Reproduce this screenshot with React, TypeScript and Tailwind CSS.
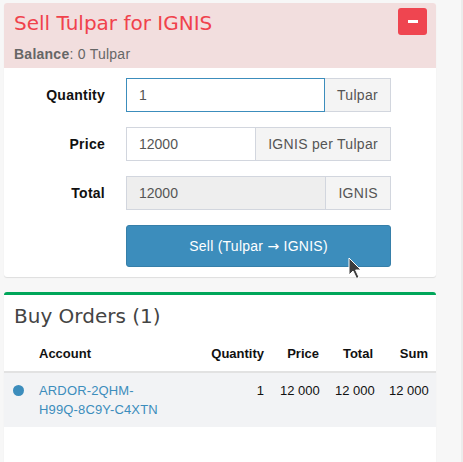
import React from "react";

const heading = "font-['DejaVu_Sans',Verdana,sans-serif] text-[20px] leading-[22px]";

function Field({
  label,
  value,
  addon,
  focused,
  disabled,
}: {
  label: string;
  value: string;
  addon: string;
  focused?: boolean;
  disabled?: boolean;
}) {
  let inputClass = "flex-1 min-w-0 h-full border px-3 text-[14px] text-[#555] outline-none";
  inputClass += focused ? " border-[#3c8dbc]" : " border-[#d2d6de]";
  inputClass += disabled ? " bg-[#eeeeee]" : " bg-white";
  return (
    <div className="flex items-center h-[34px]">
      <label className="w-[101px] text-right font-bold text-[14px] tracking-[0.25px] text-[#111]">{label}</label>
      <div className="ml-[21px] w-[265px] h-full flex">
        <input className={inputClass} defaultValue={value} readOnly={disabled} />
        <span className="h-full flex items-center px-3 border border-l-0 border-[#d2d6de] bg-[#f4f4f4] text-[14px] tracking-[0.3px] text-[#555]">
          {addon}
        </span>
      </div>
    </div>
  );
}

function Cursor() {
  return (
    <svg
      className="absolute left-[348px] top-[257px]"
      width="14"
      height="23"
      viewBox="0 0 14 23"
    >
      <path
        d="M1 1 L1 18 L5 14 L8.5 21.5 L11 20.3 L7.6 13 L13 13 Z"
        fill="#3d3d3d"
        stroke="#ffffff"
        strokeWidth="1"
        strokeLinejoin="round"
      />
    </svg>
  );
}

export default function App() {
  return (
    <div className="relative h-[462px] overflow-hidden bg-[#f7f7f7] pt-[3px] pl-[4px] font-['Liberation_Sans',Arial,sans-serif]">
      <div className="absolute right-0 top-0 h-full w-[2px] bg-[#ececec]" />

      {/* sell box */}
      <div className="w-[432px] rounded-[3px] bg-white shadow-[0_1px_1px_rgba(0,0,0,0.1)] overflow-hidden">
        <div className="h-[65px] bg-[#f2dede] pl-[10px] pr-[9px] pt-[5px]">
          <div className="flex justify-between items-start">
            <h3 className={heading + " mt-[4px] text-[#f0424c]"}>Sell Tulpar for IGNIS</h3>
            <button className="w-[29px] h-[27px] rounded-[3px] bg-[#ef4550] flex items-center justify-center">
              <span className="block w-[10px] h-[3px] bg-white" />
            </button>
          </div>
          <p className="mt-[9px] text-[14px] leading-[20px] tracking-[0.25px] text-[#666]">
            <b>Balance</b>: 0 Tulpar
          </p>
        </div>
        <div className="flex flex-col gap-[15px] pt-[10px] pb-[10px]">
          <Field label="Quantity" value="1" addon="Tulpar" focused />
          <Field label="Price" value="12000" addon="IGNIS per Tulpar" />
          <Field label="Total" value="12000" addon="IGNIS" disabled />
          <div className="pl-[122px]">
            <button className="w-[265px] h-[42px] rounded-[3px] bg-[#3c8dbc] border border-[#367fa9] text-white text-[14px] tracking-[0.25px]">
              Sell (Tulpar <span className="font-['DejaVu_Sans',sans-serif] text-[14px]">→</span> IGNIS)
            </button>
          </div>
        </div>
      </div>

      {/* buy orders */}
      <div className="mt-[15px] w-[432px] h-[200px] rounded-[3px] border-t-[3px] border-[#00a65a] bg-white shadow-[0_1px_1px_rgba(0,0,0,0.1)]">
        <h3 className={heading + " pl-[10px] pt-[10px] pb-[9px] text-[#444]"}>Buy Orders (1)</h3>
        <table className="w-[432px] table-fixed border-collapse text-[13px] leading-[19px] text-[#111]">
          <colgroup>
            <col className="w-[27px]" />
            <col className="w-[169px]" />
            <col className="w-[72px]" />
            <col className="w-[55px]" />
            <col className="w-[54px]" />
            <col className="w-[55px]" />
          </colgroup>
          <thead>
            <tr className="border-b-2 border-[#e2e2e2] font-bold">
              <th className="p-2" />
              <th className="p-2 text-left">Account</th>
              <th className="p-2 text-right">Quantity</th>
              <th className="p-2 text-right">Price</th>
              <th className="p-2 text-right">Total</th>
              <th className="p-2 text-right">Sum</th>
            </tr>
          </thead>
          <tbody>
            <tr className="bg-[#f2f3f5] align-top">
              <td className="p-2">
                <span className="block w-[11px] h-[11px] mt-[4px] ml-[1px] rounded-full bg-[#3c8dbc]" />
              </td>
              <td className="p-2 text-[#3c8dbc] tracking-[0.15px]">
                ARDOR-2QHM-
                <br />
                H99Q-8C9Y-C4XTN
              </td>
              <td className="p-2 text-right">1</td>
              <td className="p-2 text-right whitespace-nowrap">12 000</td>
              <td className="p-2 text-right whitespace-nowrap">12 000</td>
              <td className="p-2 text-right whitespace-nowrap">12 000</td>
            </tr>
          </tbody>
        </table>
      </div>

      <Cursor />
    </div>
  );
}
